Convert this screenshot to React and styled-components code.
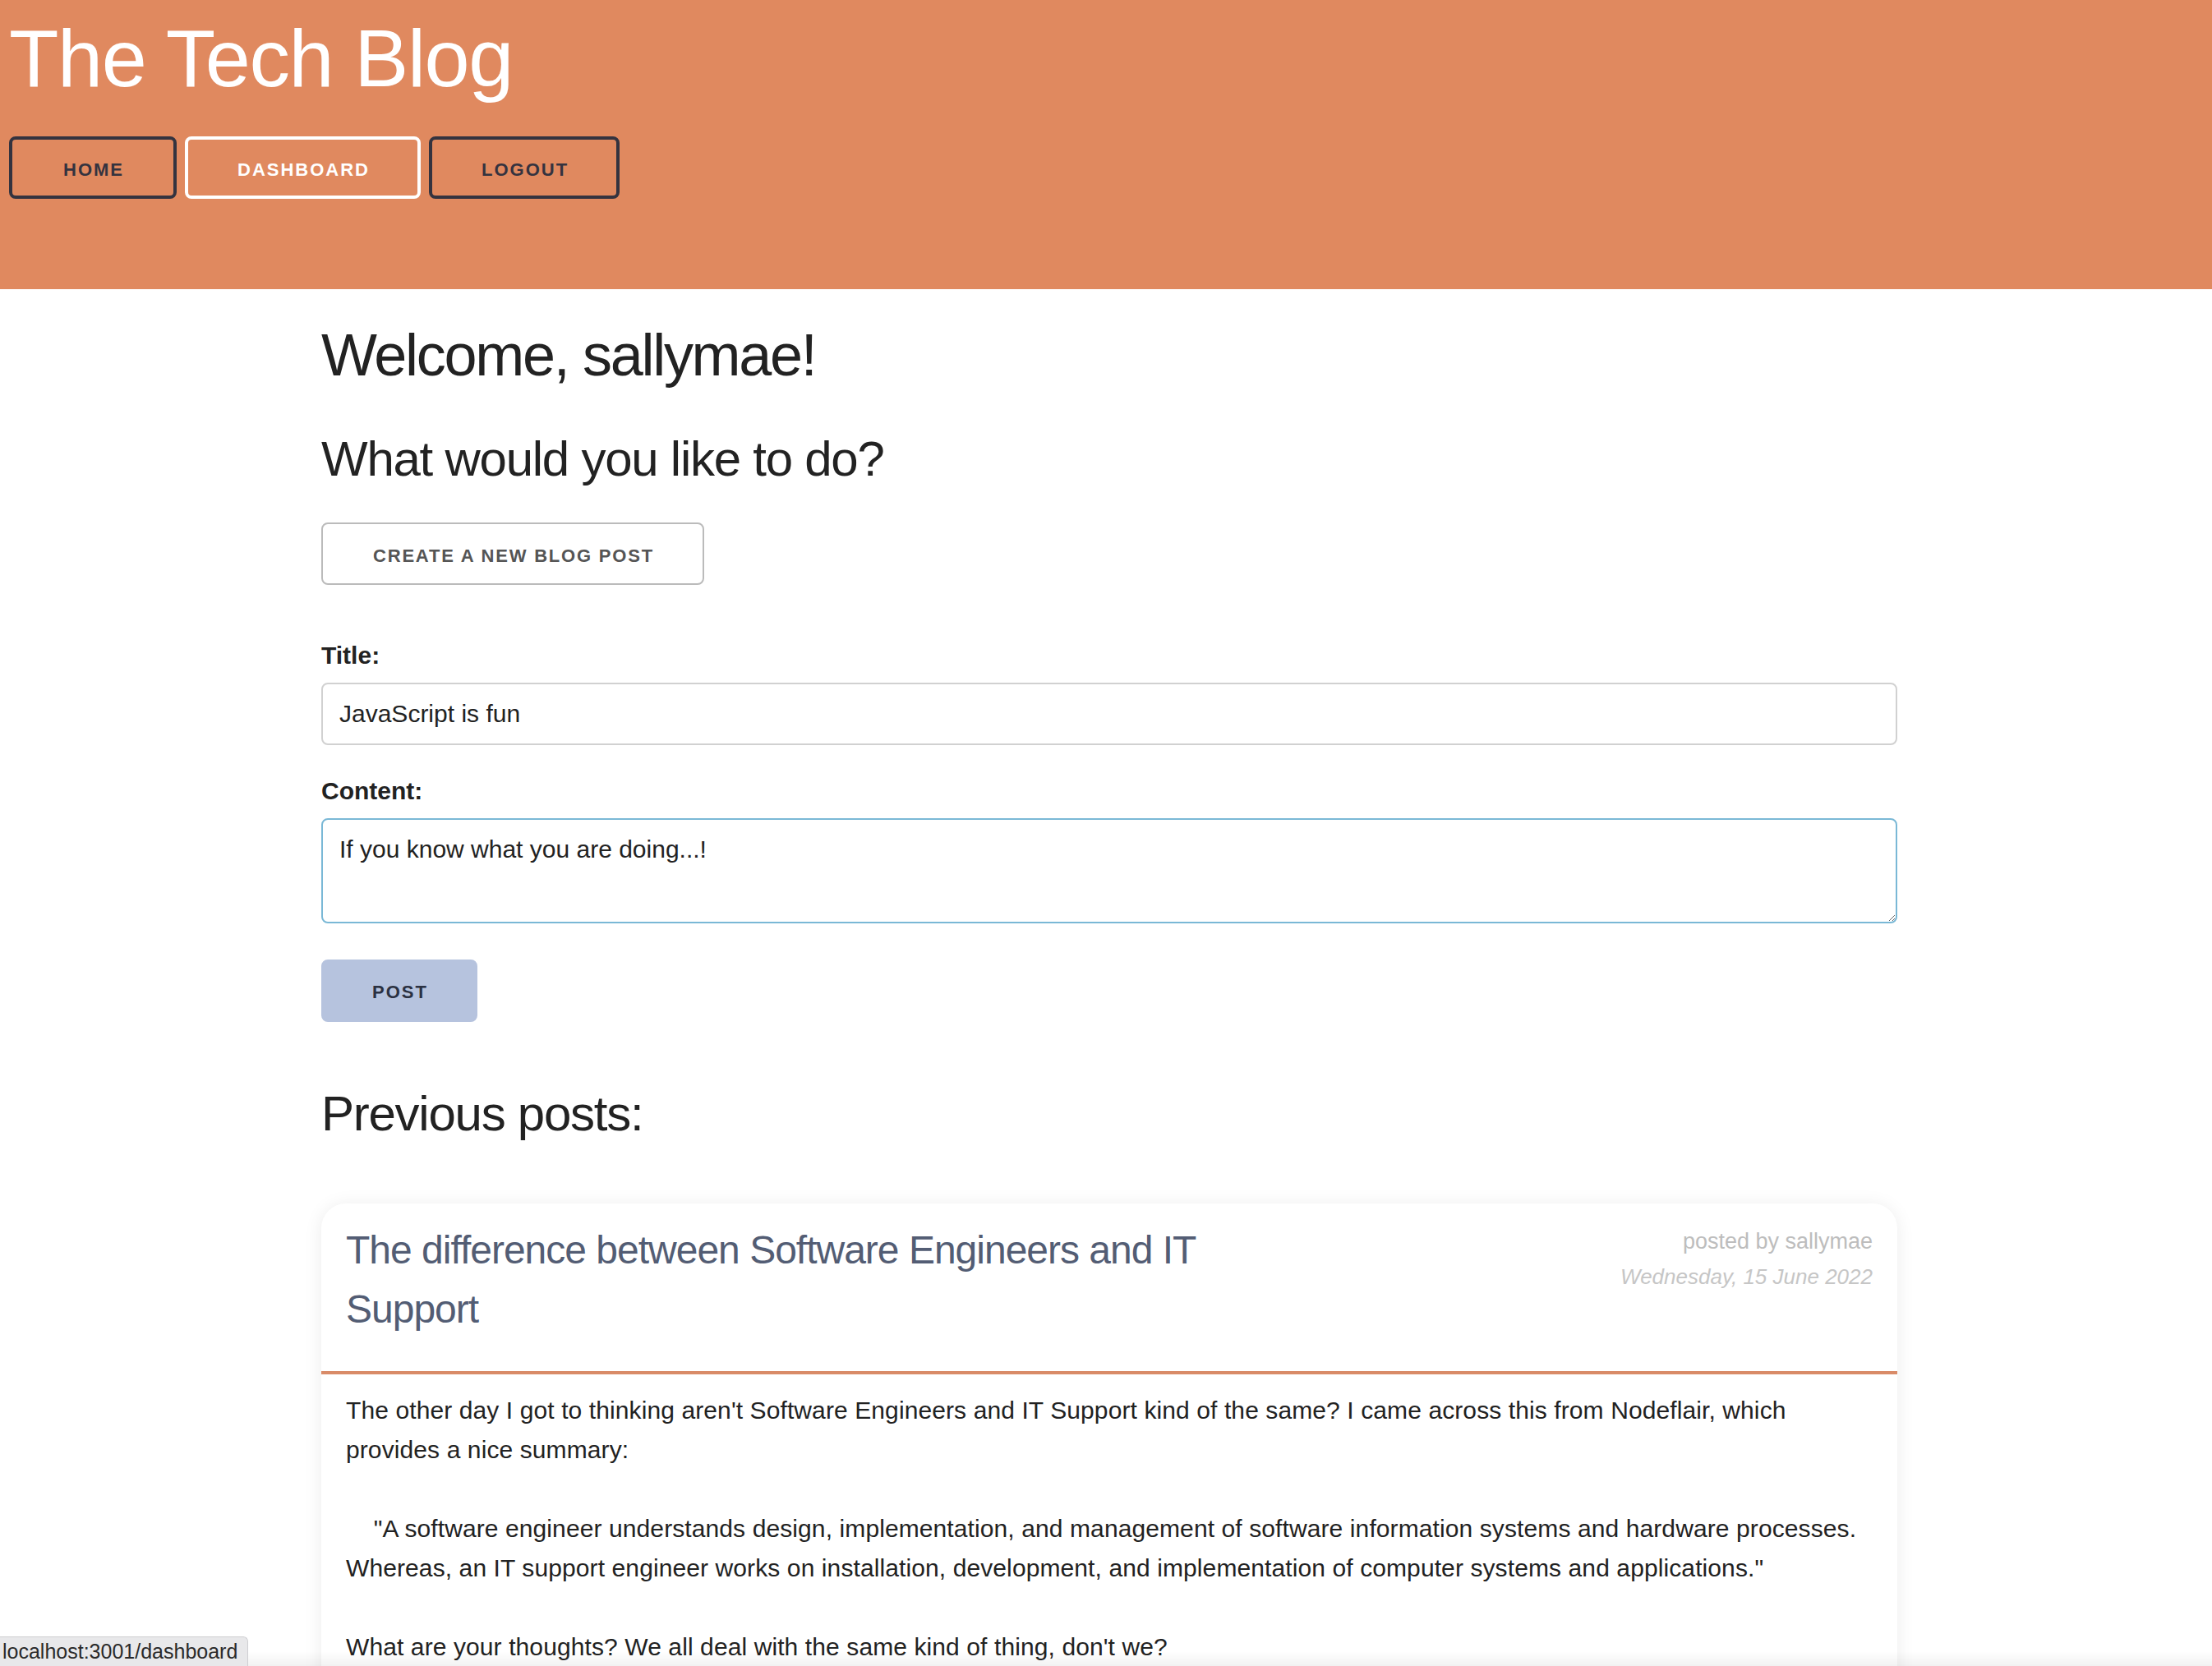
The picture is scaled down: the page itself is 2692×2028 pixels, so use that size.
import React from "react";
import styled, { createGlobalStyle } from "styled-components";

const GlobalStyle = createGlobalStyle`
  html, body {
    margin: 0;
    padding: 0;
    background: #ffffff;
    color: #222222;
    font-family: "Liberation Sans", Arial, Helvetica, sans-serif;
  }
  *, *::before, *::after { box-sizing: border-box; }
`;

const Header = styled.header`
  background: #e0895f;
  padding: 12px 11px 110px 11px;
  display: flex;
  flex-direction: column;
`;

const SiteTitle = styled.h1`
  margin: 0;
  font-size: 99px;
  line-height: 118px;
  font-weight: 400;
  letter-spacing: -1.4px;
  color: #ffffff;
`;

const Nav = styled.nav`
  margin-top: 36px;
  display: flex;
  gap: 10px;
`;

const NavButton = styled.a`
  display: inline-flex;
  align-items: center;
  justify-content: center;
  height: 76px;
  padding: 5px ${(p) => (p.$wide ? 60 : 58)}px 0 ${(p) => (p.$wide ? 62 : 60)}px;
  border: 4px solid ${(p) => (p.$active ? "#ffffff" : "#34333f")};
  border-radius: 8px;
  color: ${(p) => (p.$active ? "#ffffff" : "#34333f")};
  font-size: 22px;
  font-weight: 700;
  letter-spacing: 2px;
  text-transform: uppercase;
  text-decoration: none;
  cursor: pointer;
`;

const Main = styled.main`
  width: 1918px;
  margin-left: 391px;
  padding-top: 35px;
  display: flex;
  flex-direction: column;
  align-items: flex-start;
`;

const Welcome = styled.h2`
  margin: 0;
  font-size: 72px;
  line-height: 90px;
  font-weight: 400;
  letter-spacing: -2.3px;
`;

const Heading3 = styled.h3`
  margin: ${(p) => p.$top}px 0 0 0;
  font-size: 60px;
  line-height: 78px;
  font-weight: 400;
  letter-spacing: -1.25px;
`;

const OutlineButton = styled.button`
  margin-top: 38px;
  height: 76px;
  padding: 5px 59px 0 61px;
  background: #ffffff;
  border: 2px solid #bbbbbb;
  border-radius: 8px;
  color: #555555;
  font-family: inherit;
  font-size: 22px;
  font-weight: 700;
  letter-spacing: 1.8px;
  text-transform: uppercase;
  cursor: pointer;
`;

const Form = styled.form`
  margin-top: 62px;
  width: 100%;
  display: flex;
  flex-direction: column;
  align-items: flex-start;
`;

const Label = styled.label`
  display: block;
  font-size: 30px;
  line-height: 48px;
  font-weight: 700;
  color: #222222;
  margin-bottom: 9px;
`;

const fieldBase = `
  width: 100%;
  font-family: "Liberation Sans", Arial, Helvetica, sans-serif;
  font-size: 30px;
  color: #222222;
  background: #ffffff;
  border-radius: 8px;
  outline: none;
`;

const TextInput = styled.input`
  ${fieldBase}
  height: 76px;
  padding: 0 20px;
  border: 2px solid #d1d1d1;
  margin-bottom: 32px;
`;

const TextArea = styled.textarea`
  ${fieldBase}
  height: 128px;
  padding: 12px 20px;
  line-height: 48px;
  border: 2px solid #7ab8d6;
  resize: vertical;
  margin-bottom: 44px;
`;

const SubmitButton = styled.button`
  height: 76px;
  padding: 3px 58px 0 60px;
  background: #b6c3de;
  border: 2px solid #b6c3de;
  border-radius: 8px;
  color: #2b3142;
  font-family: inherit;
  font-size: 22px;
  font-weight: 700;
  letter-spacing: 2px;
  text-transform: uppercase;
  cursor: pointer;
`;

const PostCard = styled.article`
  margin-top: 70px;
  width: 100%;
  background: #ffffff;
  border-radius: 30px;
  box-shadow: 0 2px 22px rgba(0, 0, 0, 0.08);
  overflow: hidden;
`;

const PostHeader = styled.div`
  display: flex;
  justify-content: space-between;
  align-items: flex-start;
  padding: 21px 30px 39px 30px;
  border-bottom: 4px solid #d98b68;
`;

const PostTitle = styled.h4`
  margin: 0;
  max-width: 60%;
  font-size: 48px;
  line-height: 72px;
  font-weight: 400;
  letter-spacing: -1px;
  color: #535d74;
`;

const PostMeta = styled.div`
  padding-top: 4px;
  display: flex;
  flex-direction: column;
  align-items: flex-end;
`;

const MetaLine = styled.span`
  font-size: ${(p) => (p.$italic ? 26 : 27)}px;
  line-height: 43px;
  font-style: ${(p) => (p.$italic ? "italic" : "normal")};
  color: ${(p) => (p.$italic ? "#c6c6c6" : "#bdbdbd")};
  white-space: nowrap;
`;

const PostBody = styled.div`
  padding: 20px 30px 40px 30px;
  font-size: 30px;
  line-height: 48px;
  letter-spacing: 0.1px;
  color: #222222;
  white-space: pre-wrap;
`;

const StatusBar = styled.div`
  position: fixed;
  left: 0;
  bottom: 0;
  height: 36px;
  padding: 0 12px 0 3px;
  display: flex;
  align-items: center;
  background: #e8e8ea;
  border-top: 1px solid #cfcfd2;
  border-right: 1px solid #cfcfd2;
  border-top-right-radius: 6px;
  font-size: 25px;
  color: #2a2a2a;
  z-index: 2;
`;

const BottomShade = styled.div`
  position: fixed;
  left: 0;
  right: 0;
  bottom: 0;
  height: 18px;
  background: linear-gradient(rgba(0, 0, 0, 0), rgba(0, 0, 0, 0.05));
  pointer-events: none;
  z-index: 1;
`;

const bodyText =
  "The other day I got to thinking aren't Software Engineers and IT Support kind of the same? I came across this from Nodeflair, which provides a nice summary:\n\n" +
  '    "A software engineer understands design, implementation, and management of software information systems and hardware processes. Whereas, an IT support engineer works on installation, development, and implementation of computer systems and applications."\n\n' +
  "What are your thoughts? We all deal with the same kind of thing, don't we?";

export default function App() {
  return (
    <>
      <GlobalStyle />
      <Header>
        <SiteTitle>The Tech Blog</SiteTitle>
        <Nav>
          <NavButton $wide>Home</NavButton>
          <NavButton $active>Dashboard</NavButton>
          <NavButton>Logout</NavButton>
        </Nav>
      </Header>
      <Main>
        <Welcome>Welcome, sallymae!</Welcome>
        <Heading3 $top={43}>What would you like to do?</Heading3>
        <OutlineButton type="button">Create a new blog post</OutlineButton>
        <Form onSubmit={(e) => e.preventDefault()}>
          <Label htmlFor="post-title">Title:</Label>
          <TextInput id="post-title" type="text" defaultValue="JavaScript is fun" />
          <Label htmlFor="post-content">Content:</Label>
          <TextArea id="post-content" defaultValue="If you know what you are doing...!" />
          <SubmitButton type="submit">Post</SubmitButton>
        </Form>
        <Heading3 $top={73}>Previous posts:</Heading3>
        <PostCard>
          <PostHeader>
            <PostTitle>The difference between Software Engineers and IT Support</PostTitle>
            <PostMeta>
              <MetaLine>posted by sallymae</MetaLine>
              <MetaLine $italic>Wednesday, 15 June 2022</MetaLine>
            </PostMeta>
          </PostHeader>
          <PostBody>{bodyText}</PostBody>
        </PostCard>
      </Main>
      <BottomShade />
      <StatusBar>localhost:3001/dashboard</StatusBar>
    </>
  );
}
